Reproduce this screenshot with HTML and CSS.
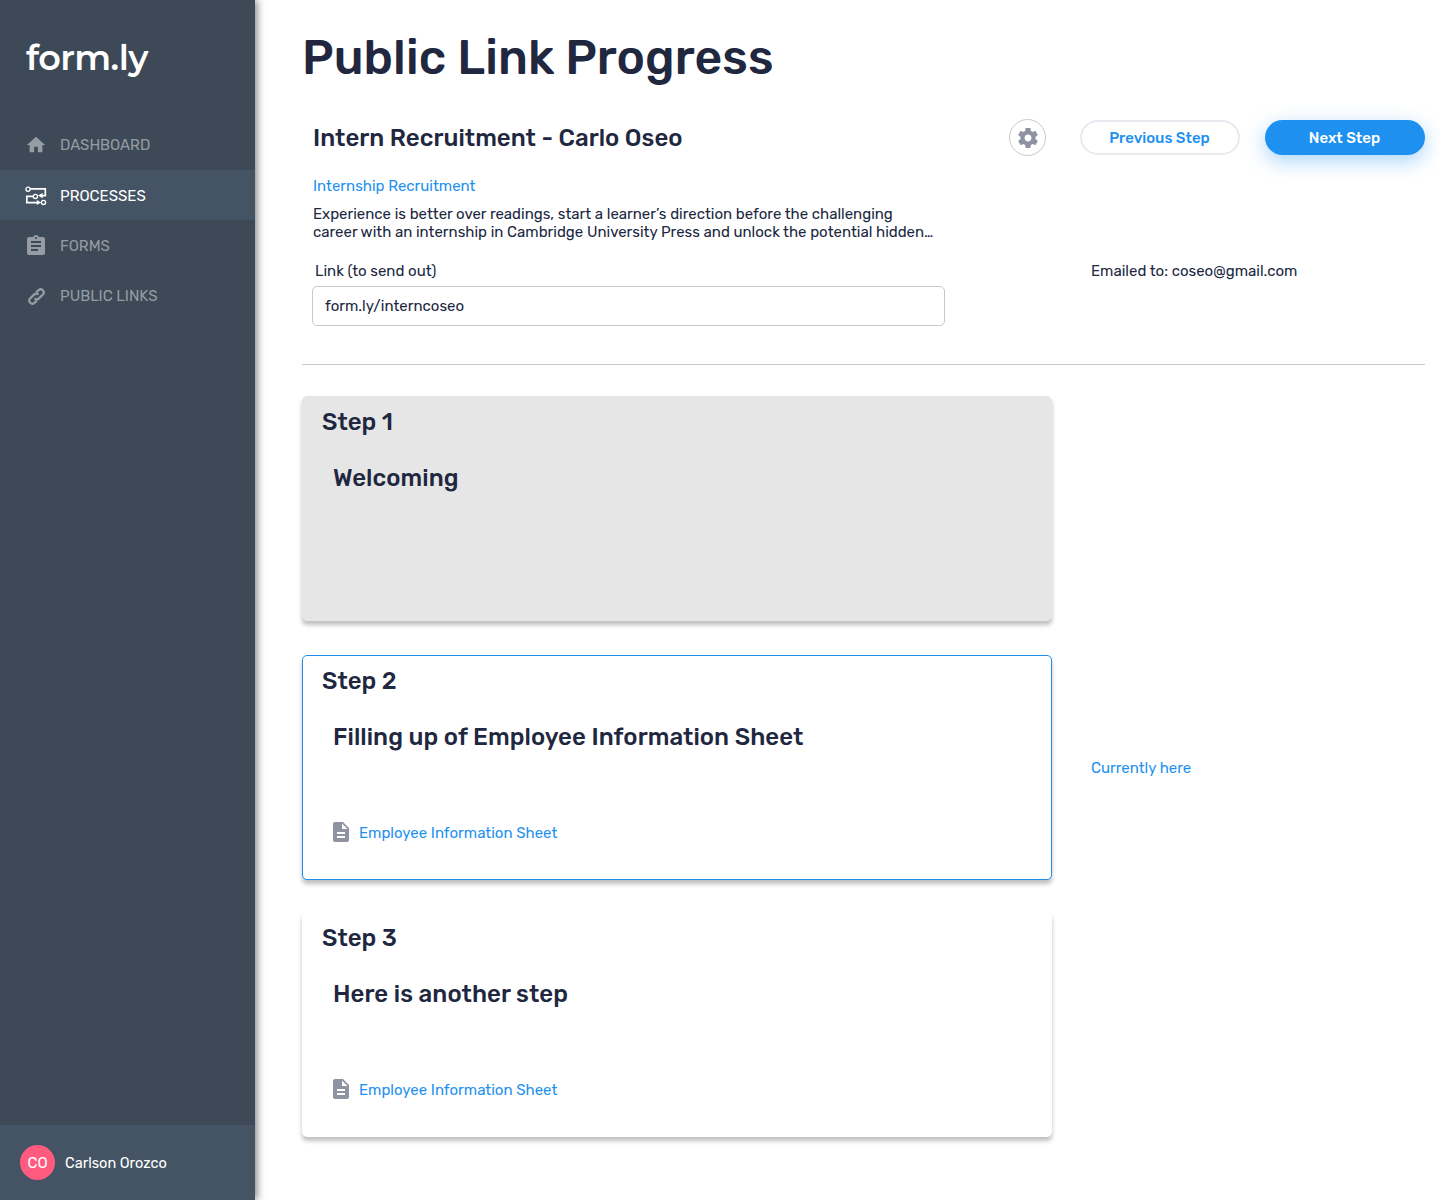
FILE: index.html
```html
<!DOCTYPE html>
<html lang="en">
<head>
<meta charset="utf-8">
<title>form.ly – Public Link Progress</title>
<link rel="stylesheet" href="styles.css">
</head>
<body>
<div class="app">
  <aside class="sidebar">
    <div class="logo">form.ly</div>
    <nav class="nav">
      <a class="nav-item"><svg class="nav-icon home" viewBox="0 0 24 24"><path d="M10 20v-6h4v6h5v-8h3L12 3 2 12h3v8z"/></svg><span>DASHBOARD</span></a>
      <a class="nav-item active"><svg class="nav-icon" viewBox="0 0 24 24"><g fill="none" stroke="currentColor" stroke-width="1.3"><circle cx="4" cy="5.3" r="2.1"/><circle cx="11.4" cy="12.4" r="2.1"/><circle cx="19.5" cy="18.4" r="2.1"/><path stroke-width="1.7" d="M6.2 4.9H21.3V11.6H18M9.2 12.4H2.8V18.6H14"/></g><path d="M14 11.6l4.6-2.6v5.2zM17.2 18.5l-4.4-2.6v5.2z"/></svg><span>PROCESSES</span></a>
      <a class="nav-item"><svg class="nav-icon" viewBox="0 0 24 24"><path d="M19 3h-4.18C14.4 1.84 13.3 1 12 1s-2.4.84-2.82 2H5c-1.1 0-2 .9-2 2v14c0 1.1.9 2 2 2h14c1.1 0 2-.9 2-2V5c0-1.1-.9-2-2-2zm-7 0c.55 0 1 .45 1 1s-.45 1-1 1-1-.45-1-1 .45-1 1-1zm2 14H7v-2h7v2zm3-4H7v-2h10v2zm0-4H7V7h10v2z"/></svg><span>FORMS</span></a>
      <a class="nav-item"><svg class="nav-icon chain" viewBox="0 0 24 24"><path d="M9.6 14.4a3.9 3.9 0 0 0 5.5 0l5-5a3.9 3.9 0 0 0-5.5-5.5l-3.1 3.1M14.4 9.6a3.9 3.9 0 0 0-5.5 0l-5 5a3.9 3.9 0 0 0 5.5 5.5l3.1-3.1"/></svg><span>PUBLIC LINKS</span></a>
    </nav>
    <div class="user"><div class="avatar">CO</div><span class="username">Carlson Orozco</span></div>
  </aside>
  <main class="main">
    <h1 class="title">Public Link Progress</h1>
    <header class="head">
      <h2 class="name">Intern Recruitment - Carlo Oseo</h2>
      <button class="gear" aria-label="Settings"><svg viewBox="0 0 24 24"><path d="M19.43 12.98c.04-.32.07-.64.07-.98s-.03-.66-.07-.98l2.11-1.65c.19-.15.24-.42.12-.64l-2-3.46c-.12-.22-.39-.3-.61-.22l-2.49 1c-.52-.4-1.08-.73-1.69-.98l-.38-2.65C14.46 2.18 14.25 2 14 2h-4c-.25 0-.46.18-.49.42l-.38 2.65c-.61.25-1.17.59-1.69.98l-2.49-1c-.23-.09-.49 0-.61.22l-2 3.46c-.13.22-.07.49.12.64l2.11 1.65c-.04.32-.07.65-.07.98s.03.66.07.98l-2.11 1.65c-.19.15-.24.42-.12.64l2 3.46c.12.22.39.3.61.22l2.49-1c.52.4 1.08.73 1.69.98l.38 2.65c.03.24.24.42.49.42h4c.25 0 .46-.18.49-.42l.38-2.65c.61-.25 1.17-.59 1.69-.98l2.49 1c.23.09.49 0 .61-.22l2-3.46c.12-.22.07-.49-.12-.64l-2.11-1.65zM12 15.5c-1.93 0-3.5-1.57-3.5-3.5s1.57-3.5 3.5-3.5 3.5 1.57 3.5 3.5-1.57 3.5-3.5 3.5z"/></svg></button>
      <button class="btn outline">Previous Step</button>
      <button class="btn primary">Next Step</button>
    </header>
    <section class="info">
      <a class="process">Internship Recruitment</a>
      <p class="desc">Experience is better over readings, start a learner’s direction before the challenging<br>career with an internship in Cambridge University Press and unlock the potential hidden…</p>
      <div class="labels"><span>Link (to send out)</span><span>Emailed to: coseo@gmail.com</span></div>
      <div class="field">form.ly/interncoseo</div>
    </section>
    <section class="steps">
      <div class="row">
        <article class="card done">
          <h3 class="step">Step 1</h3>
          <h4 class="what">Welcoming</h4>
        </article>
      </div>
      <div class="row">
        <article class="card current">
          <h3 class="step">Step 2</h3>
          <h4 class="what">Filling up of Employee Information Sheet</h4>
          <a class="file"><svg viewBox="0 0 24 24"><path d="M14 2H6c-1.1 0-2 .9-2 2v16c0 1.1.9 2 2 2h12c1.1 0 2-.9 2-2V8l-6-6zm2 16H8v-2h8v2zm0-4H8v-2h8v2zm-3-5V3.5L18.5 9H13z"/></svg><span>Employee Information Sheet</span></a>
        </article>
        <span class="here">Currently here</span>
      </div>
      <div class="row">
        <article class="card">
          <h3 class="step">Step 3</h3>
          <h4 class="what">Here is another step</h4>
          <a class="file"><svg viewBox="0 0 24 24"><path d="M14 2H6c-1.1 0-2 .9-2 2v16c0 1.1.9 2 2 2h12c1.1 0 2-.9 2-2V8l-6-6zm2 16H8v-2h8v2zm0-4H8v-2h8v2zm-3-5V3.5L18.5 9H13z"/></svg><span>Employee Information Sheet</span></a>
        </article>
      </div>
    </section>
  </main>
</div>
</body>
</html>
```
FILE: styles.css
```css
* { box-sizing: border-box; }
body { margin: 0; background: #fff; color: #20273f; font: 15px/18px Rubik, Roboto, "Noto Sans", sans-serif; }
h1, h2, h3, h4, p { margin: 0; font-weight: 500; }
svg { display: block; fill: currentColor; }

.app { display: flex; height: 1200px; overflow: hidden; }

.sidebar { display: flex; flex-direction: column; width: 255px; flex: none; background: #3d4956; box-shadow: 2px 0 8px rgba(0,0,0,.5); color: #fff; }
.logo { height: 120px; padding: 36px 0 0 26px; font: 600 35px/44px Montserrat, Lato, sans-serif; letter-spacing: -.5px; }
.nav { flex: 1; }
.nav-item { display: flex; align-items: center; height: 50px; padding-left: 24px; color: #969ca3; }
.nav-item + .nav-item { padding-top: 2px; }
.nav-item.active { background: #455464; color: #fff; }
.nav-icon { width: 24px; height: 24px; margin-right: 12px; }
.home { width: 22px; height: 22px; margin: 0 13px 0 1px; }
.chain { width: 19px; height: 19px; margin: 0 14.5px 0 2.5px; fill: none; stroke: currentColor; stroke-width: 2.9; }
.user { display: flex; align-items: center; gap: 10px; height: 75px; padding-left: 20px; background: #455464; }
.avatar { width: 35px; height: 35px; border-radius: 50%; background: #ff5b7f; line-height: 36px; text-align: center; }
.username { padding-top: 1px; font-size: 14.5px; }

.main { flex: 1; padding: 28px 15px 0 47px; }
.title { font-size: 48px; line-height: 60px; letter-spacing: .08px; }
.head { display: flex; align-items: center; height: 37px; margin-top: 31px; padding-left: 11px; }
.name { flex: 1; font-size: 24px; line-height: 36px; letter-spacing: .03px; }
.gear { display: flex; align-items: center; justify-content: center; width: 37px; height: 37px; margin-right: 34px; padding: 0; border: 1px solid #c9c9ce; border-radius: 50%; background: #fff; color: #8f92a1; }
.gear svg { width: 24px; height: 24px; flex: none; }
.btn { width: 160px; height: 35px; padding: 0 1px 0 0; border-radius: 18px; font: 500 15px/18px Rubik, Roboto, sans-serif; }
.outline { margin-right: 25px; border: 2px solid #e9e9f0; background: #fff; color: #1e91f0; }
.primary { border: 0; background: #1e91f0; color: #fff; box-shadow: 0 6px 20px rgba(30,145,240,.38); }

.info { padding: 21px 0 38px 10px; border-bottom: 1px solid #c8c8c8; }
.process { display: block; padding-left: 1px; color: #1e91f0; }
.desc { margin-top: 10px; padding-left: 1px; font-weight: 400; white-space: nowrap; }
.labels { display: grid; grid-template-columns: 776px 1fr; margin-top: 21px; padding-left: 3px; }
.field { width: 633px; height: 40px; margin-top: 6px; padding: 10px 12px; border: 1px solid #c8c8c8; border-radius: 5px; }

.steps { display: grid; padding-top: 31px; }
.row { display: grid; grid-template-columns: 750px 1fr; column-gap: 39px; align-items: center; margin-bottom: 32px; }
.row:first-child { margin-bottom: 34px; }
.card { height: 225px; padding: 10px 19px; border: 1px solid transparent; border-radius: 5px; background: #fff; box-shadow: 0 4px 4px rgba(0,0,0,.25); }
.done { border-color: #e6e6e6; background: #e6e6e6; }
.current { border-color: #1e91f0; }
.step, .what { font-size: 24px; line-height: 30px; }
.what { margin: 26px 0 0 11px; letter-spacing: .06px; }
.file { display: flex; align-items: center; gap: 6px; margin: 68px 0 0 7px; color: #1e91f0; }
.file svg { width: 24px; height: 24px; color: #8f92a1; }
.file span { padding-top: 2px; }
.here { color: #1e91f0; }
```
